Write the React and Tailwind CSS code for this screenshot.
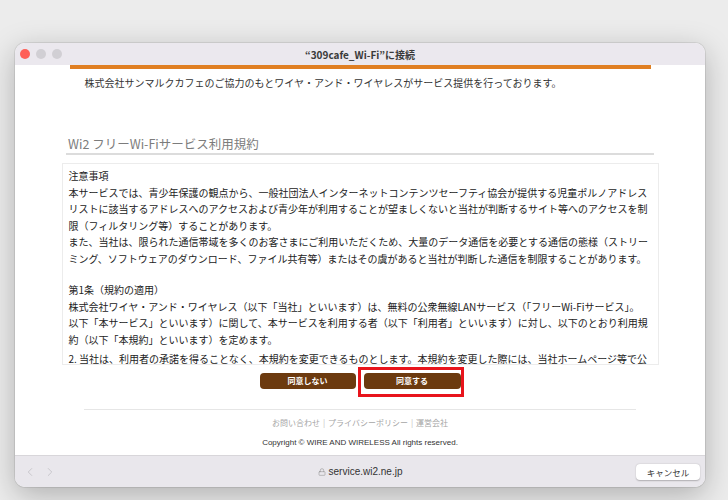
import React from 'react';
import { ChevronLeft, ChevronRight, Lock } from 'lucide-react';

const jp = { fontFamily: '"Noto Sans CJK JP", "Noto Sans", sans-serif' };

const terms = [
    '注意事項',
    '本サービスでは、青少年保護の観点から、一般社団法人インターネットコンテンツセーフティ協会が提供する児童ポルノアドレス',
    'リストに該当するアドレスへのアクセスおよび青少年が利用することが望ましくないと当社が判断するサイト等へのアクセスを制',
    '限（フィルタリング等）することがあります。',
    'また、当社は、限られた通信帯域を多くのお客さまにご利用いただくため、大量のデータ通信を必要とする通信の態様（ストリー',
    'ミング、ソフトウェアのダウンロード、ファイル共有等）またはその虞があると当社が判断した通信を制限することがあります。',
    null,
    '第1条（規約の適用）',
    '株式会社ワイヤ・アンド・ワイヤレス（以下「当社」といいます）は、無料の公衆無線LANサービス（「フリーWi-Fiサービス」。',
    '以下「本サービス」といいます）に関して、本サービスを利用する者（以下「利用者」といいます）に対し、以下のとおり利用規',
    '約（以下「本規約」といいます）を定めます。',
    undefined,
    '2. 当社は、利用者の承諾を得ることなく、本規約を変更できるものとします。本規約を変更した際には、当社ホームページ等で公',
];

const App = () => {
    return (
        <div className="w-[728px] h-[500px] bg-[#ececec] overflow-hidden pt-[43px] pl-[15px]" style={jp}>
            <div className="w-[690px] h-[444px] rounded-[10px] overflow-hidden flex flex-col bg-white shadow-[0_8px_30px_rgba(0,0,0,0.26),0_0_0_1px_rgba(0,0,0,0.08)]">
                {/* Title bar */}
                <div className="h-[22px] shrink-0 bg-[#ebe8ee] flex items-center relative">
                    <div className="flex items-center gap-[6px] pl-[5px]">
                        <span className="w-[10px] h-[10px] rounded-full bg-[#fe5f57]" />
                        <span className="w-[10px] h-[10px] rounded-full bg-[#d1cfd4]" />
                        <span className="w-[10px] h-[10px] rounded-full bg-[#d1cfd4]" />
                    </div>
                    <div className="absolute inset-0 flex items-center justify-center text-[10px] font-bold text-[#3a3a3a]">
                        “309cafe_Wi-Fi”に接続
                    </div>
                </div>

                {/* Page */}
                <div className="flex-1 min-h-0 bg-white flex flex-col items-center">
                    <div className="w-[581px] h-[4px] bg-[#e07f22]" />
                    <div className="w-[581px] px-[15px] mt-[7px] text-[10px] leading-[14px] text-[#333]">
                        株式会社サンマルクカフェのご協力のもとワイヤ・アンド・ワイヤレスがサービス提供を行っております。
                    </div>

                    <div className="w-[588px] mt-[45px] pl-[2px] text-[12.5px] leading-[17px] text-[#7c7c7c]">
                        Wi2 フリーWi-Fiサービス利用規約
                    </div>
                    <div className="w-[588px] h-[2px] bg-[#dcdcdc] mt-[1px]" />

                    <div className="w-[597px] h-[202px] shrink-0 mt-[8px] border border-[#ececec] overflow-hidden pl-[6px] pt-[4px] text-[10px] leading-[16.5px] text-[#222]">
                        {terms.map((line, i) => {
                            if (line === null) return <div key={i} className="h-[15px]" />;
                            if (line === undefined) return <div key={i} className="h-[3px]" />;
                            return <div key={i} className="whitespace-nowrap h-[16.5px]">{line}</div>;
                        })}
                    </div>

                    {/* Buttons */}
                    <div className="flex items-start gap-[8px] mt-[8px]">
                        <button className="block w-[96px] h-[16px] rounded-[4px] bg-[#6c3a0f] text-white text-[8px] font-bold leading-[16px]">同意しない</button>
                        <div className="relative w-[97px] h-[16px]">
                            <button className="block w-[97px] h-[16px] rounded-[4px] bg-[#6c3a0f] text-white text-[8px] font-bold leading-[16px]">同意する</button>
                            <div className="absolute left-[-6px] top-[-6px] w-[106px] h-[30px] border-[3px] border-[#e8141c]" />
                        </div>
                    </div>

                    <div className="w-[552px] h-px bg-[#e6e6e6] mt-[20px]" />
                    <div className="mt-[7px] text-[8px] leading-[12px] text-[#a5a5a5] flex items-center">
                        <span>お問い合わせ</span>
                        <span className="mx-[3px] text-[#bbb]">|</span>
                        <span>プライバシーポリシー</span>
                        <span className="mx-[3px] text-[#bbb]">|</span>
                        <span>運営会社</span>
                    </div>
                    <div className="mt-[8px] text-[8px] leading-[12px] text-[#333]" style={{ fontFamily: '"Liberation Sans", Arial, sans-serif' }}>
                        Copyright © WIRE AND WIRELESS All rights reserved.
                    </div>
                </div>

                {/* Bottom bar */}
                <div className="h-[32px] shrink-0 bg-[#e9e7ec] border-t border-[#d8d6da] flex items-center relative pl-[8px] pr-[5px]">
                    <div className="flex items-center gap-[6px] text-[#c4c2c7]">
                        <ChevronLeft size={14} strokeWidth={1.5} />
                        <ChevronRight size={14} strokeWidth={1.5} />
                    </div>
                    <div className="absolute inset-0 flex items-center justify-center gap-[3px] text-[10px] text-[#333]" style={{ fontFamily: '"Liberation Sans", Arial, sans-serif' }}>
                        <Lock size={8} strokeWidth={1.5} className="text-[#888]" />
                        <span>service.wi2.ne.jp</span>
                    </div>
                    <div className="ml-auto relative">
                        <button className="block w-[64px] h-[16px] rounded-[4px] bg-white text-[8.5px] leading-[16px] text-[#333] shadow-[0_0.5px_1.5px_rgba(0,0,0,0.25)]">キャンセル</button>
                    </div>
                </div>
            </div>
        </div>
    );
};

export default App;
